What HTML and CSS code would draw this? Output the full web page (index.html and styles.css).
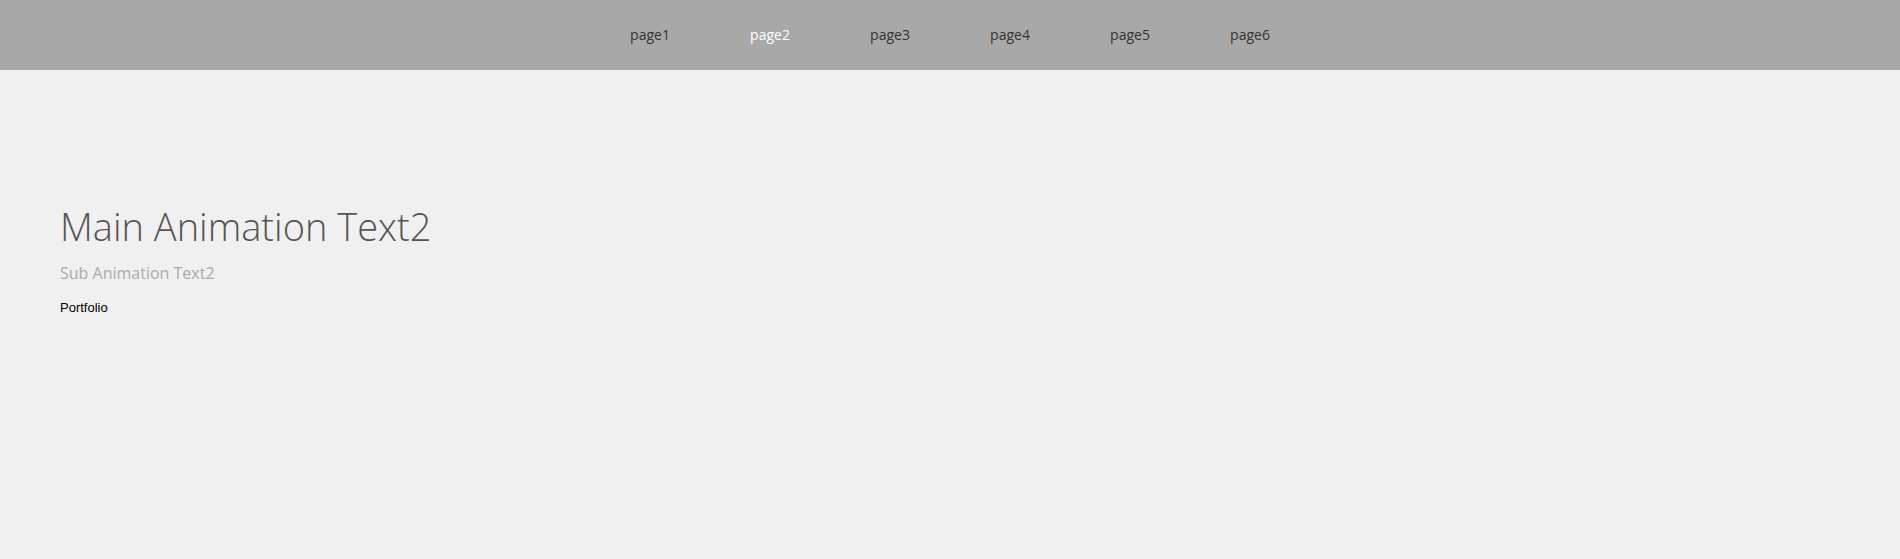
FILE: index.html
```html
<!DOCTYPE html>
<html>
<head>
<meta charset="utf-8">
<link rel="stylesheet" href="styles.css">
</head>
<body>
<header class="topbar">
  <ul class="nav">
    <li><a class="nav-link">page1</a></li>
    <li><a class="nav-link active">page2</a></li>
    <li><a class="nav-link">page3</a></li>
    <li><a class="nav-link">page4</a></li>
    <li><a class="nav-link">page5</a></li>
    <li><a class="nav-link">page6</a></li>
  </ul>
</header>
<main class="hero">
  <h1 class="main-title">Main Animation Text2</h1>
  <h2 class="sub-title">Sub Animation Text2</h2>
  <p class="label">Portfolio</p>
</main>
</body>
</html>
```
FILE: styles.css
```css
html, body {
  margin: 0;
  padding: 0;
  background: #f0f0f0;
  height: 100%;
}
.topbar {
  height: 70px;
  background: #a8a8a8;
  display: flex;
  justify-content: center;
  align-items: center;
}
.nav {
  list-style: none;
  margin: 0 0 2px;
  padding: 0;
  display: flex;
}
.nav li {
  width: 120px;
  text-align: center;
}
.nav-link {
  font-family: "Open Sans", sans-serif;
  font-size: 14px;
  color: #333;
  text-decoration: none;
}
.nav-link.active {
  color: #fff;
}
.hero {
  padding: 130px 60px 0;
}
.main-title {
  margin: 0;
  font-family: "Open Sans", sans-serif;
  font-weight: 300;
  font-size: 38px;
  line-height: 52px;
  color: #555;
}
.sub-title {
  margin: 10px 0 0;
  font-family: "Open Sans", sans-serif;
  font-weight: 400;
  font-size: 16px;
  line-height: 22px;
  color: #aaa;
}
.label {
  margin: 16px 0 0;
  font-family: "Liberation Sans", Arial, sans-serif;
  font-size: 13px;
  line-height: 15px;
  color: #000;
}
```
